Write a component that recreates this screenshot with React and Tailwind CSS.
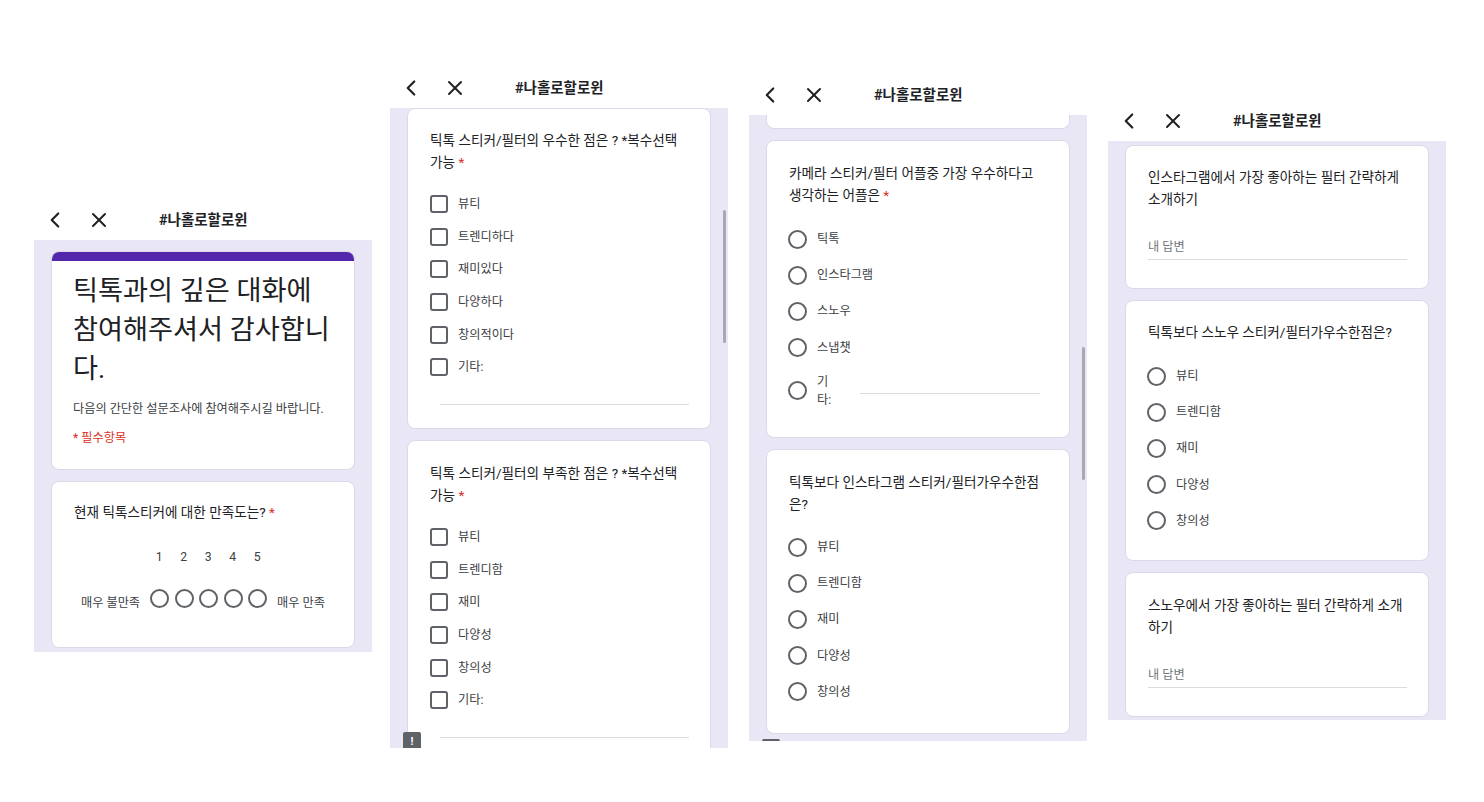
import React from 'react';
import { ChevronLeft, X } from 'lucide-react';

const Star = () => <span className="text-[#d93025]"> *</span>;

const Card = ({ className = '', children }) => (
  <div className={`shrink-0 bg-white border border-[#dcd8e8] rounded-lg pl-[22px] pr-[21px] ${className}`}>
    {children}
  </div>
);

const Question = ({ className = '', children }) => (
  <div className={`text-[13.6px] leading-[22px] text-[#202124] ${className}`}>{children}</div>
);

const CheckRow = ({ label }) => (
  <div className="flex items-center h-[32.6px] gap-[10px]">
    <span className="w-[18px] h-[18px] rounded-[3px] border-2 border-[#5f6368]" />
    <span className="text-[12.2px] text-[#3c4043]">{label}</span>
  </div>
);

const RadioRow = ({ label }) => (
  <div className="flex items-center h-[36.2px] gap-[10px]">
    <span className="w-[19px] h-[19px] -ml-px rounded-full border-2 border-[#5f6368]" />
    <span className="text-[12.2px] text-[#3c4043]">{label}</span>
  </div>
);

const Answer = () => (
  <div className="w-[259px] mt-[28px]">
    <div className="text-[12.2px] leading-[18px] text-[#70757a]">내 답변</div>
    <div className="h-px mt-[3px] bg-[#dadce0]" />
  </div>
);

const Panel = ({ top, lavenderHeight, children }) => (
  <div className={`relative w-[338px] shrink-0 ${top}`}>
    <div className="flex items-center h-10">
      <ChevronLeft size={26} strokeWidth={2} className="ml-[8px] text-[#202124]" />
      <X size={24} strokeWidth={2} className="ml-[19px] text-[#202124]" />
      <span className="ml-[48px] mt-px text-[14.5px] font-bold text-[#202124]">#나홀로할로윈</span>
    </div>
    <div className={`relative flex flex-col gap-[11px] px-[17px] overflow-hidden bg-[#e9e6f5] ${lavenderHeight}`}>
      {children}
    </div>
  </div>
);

const FirstPanel = () => (
  <Panel top="mt-[200px]" lavenderHeight="h-[412px] pt-[11px]">
    <div className="shrink-0 h-[219px] bg-white border border-[#dcd8e8] rounded-lg overflow-hidden">
      <div className="h-[9px] bg-[#5327ab]" />
      <div className="pl-[21px] pr-[20px]">
        <div className="mt-[11px] text-[27.2px] leading-[39px] text-[#202124]">틱톡과의 깊은 대화에 참여해주셔서 감사합니다.</div>
        <div className="mt-[11px] text-[12.2px] leading-[18px] text-[#3c4043]">다음의 간단한 설문조사에 참여해주시길 바랍니다.</div>
        <div className="mt-[11px] text-[12.2px] leading-[18px] text-[#d93025]">* 필수항목</div>
      </div>
    </div>
    <Card className="h-[167px] pt-[19px]">
      <Question>현재 틱톡스티커에 대한 만족도는?<Star /></Question>
      <div className="flex mt-[25px] ml-[73px] text-[12.2px] leading-[18px] text-[#3c4043]">
        {[1, 2, 3, 4, 5].map((n) => (
          <span key={n} className="w-[24.5px] text-center">{n}</span>
        ))}
      </div>
      <div className="flex items-center mt-[18px] ml-[7px] text-[12.2px] text-[#3c4043]">
        <span className="w-[69px] mt-[10px]">매우 불만족</span>
        <span className="flex w-[127px] gap-[5.5px]">
          {[1, 2, 3, 4, 5].map((n) => (
            <span key={n} className="w-[19px] h-[19px] rounded-full border-2 border-[#5f6368]" />
          ))}
        </span>
        <span className="mt-[10px]">매우 만족</span>
      </div>
    </Card>
  </Panel>
);

const SecondPanel = () => (
  <Panel top="ml-[18px] mt-[68px]" lavenderHeight="h-[640px]">
    <Card className="h-[321px] pt-[20px]">
      <Question>틱톡 스티커/필터의 우수한 점은 ? *복수선택 가능<Star /></Question>
      <div className="mt-[15px]">
        {['뷰티', '트렌디하다', '재미있다', '다양하다', '창의적이다', '기타:'].map((t) => (
          <CheckRow key={t} label={t} />
        ))}
      </div>
      <div className="h-px w-[249px] ml-[10px] mt-[20px] bg-[#dadce0]" />
    </Card>
    <Card className="h-[320px] pt-[21px]">
      <Question>틱톡 스티커/필터의 부족한 점은 ? *복수선택 가능<Star /></Question>
      <div className="mt-[15px]">
        {['뷰티', '트렌디함', '재미', '다양성', '창의성', '기타:'].map((t) => (
          <CheckRow key={t} label={t} />
        ))}
      </div>
      <div className="h-px w-[249px] ml-[10px] mt-[20px] bg-[#dadce0]" />
    </Card>
    <div className="absolute right-[2px] top-[102px] w-[3px] h-[133px] rounded-full bg-[#aaa7b5]" />
    <div className="absolute left-[13px] top-[624px] flex items-center justify-center w-[18px] h-[18px] rounded-[2px] bg-[#5f6368] text-[11px] leading-none font-bold text-white">!</div>
  </Panel>
);

const ThirdPanel = () => (
  <Panel top="ml-[21px] mt-[75px]" lavenderHeight="h-[626px]">
    <Card className="h-[15px] -mt-px rounded-t-none border-t-0" />
    <Card className="h-[298px] pt-[21px]">
      <Question>카메라 스티커/필터 어플중 가장 우수하다고 생각하는 어플은<Star /></Question>
      <div className="mt-[15px]">
        {['틱톡', '인스타그램', '스노우', '스냅챗'].map((t) => (
          <RadioRow key={t} label={t} />
        ))}
      </div>
      <div className="flex items-center mt-[7px]">
        <span className="w-[19px] h-[19px] -ml-px rounded-full border-2 border-[#5f6368]" />
        <span className="w-[14px] ml-[10px] text-[12.2px] leading-[18px] text-[#3c4043]">기타:</span>
        <span className="w-[180px] h-px ml-[29px] mt-[6px] bg-[#dadce0]" />
      </div>
    </Card>
    <Card className="h-[285px] pt-[21px]">
      <Question>틱톡보다 인스타그램 스티커/필터가우수한점은?</Question>
      <div className="mt-[14px]">
        {['뷰티', '트렌디함', '재미', '다양성', '창의성'].map((t) => (
          <RadioRow key={t} label={t} />
        ))}
      </div>
    </Card>
    <div className="absolute right-[2px] top-[232px] w-[3px] h-[133px] rounded-full bg-[#aaa7b5]" />
    <div className="absolute left-[13px] top-[624px] w-[18px] h-[18px] rounded-[2px] bg-[#5f6368]" />
  </Panel>
);

const FourthPanel = () => (
  <Panel top="ml-[21px] mt-[101px]" lavenderHeight="h-[579px] pt-[4px]">
    <Card className="h-[144px] pt-[20px]">
      <Question>인스타그램에서 가장 좋아하는 필터 간략하게 소개하기</Question>
      <Answer />
    </Card>
    <Card className="h-[261px] pt-[20px]">
      <Question>틱톡보다 스노우 스티커/필터가우수한점은?</Question>
      <div className="mt-[15px]">
        {['뷰티', '트렌디함', '재미', '다양성', '창의성'].map((t) => (
          <RadioRow key={t} label={t} />
        ))}
      </div>
    </Card>
    <Card className="h-[145px] pt-[21px]">
      <Question>스노우에서 가장 좋아하는 필터 간략하게 소개하기</Question>
      <Answer />
    </Card>
  </Panel>
);

export default function App() {
  return (
    <div className="flex items-start w-[1484px] h-[802px] pl-[34px] overflow-hidden bg-white font-[Roboto,'Noto_Sans_CJK_KR',sans-serif]">
      <FirstPanel />
      <SecondPanel />
      <ThirdPanel />
      <FourthPanel />
    </div>
  );
}
